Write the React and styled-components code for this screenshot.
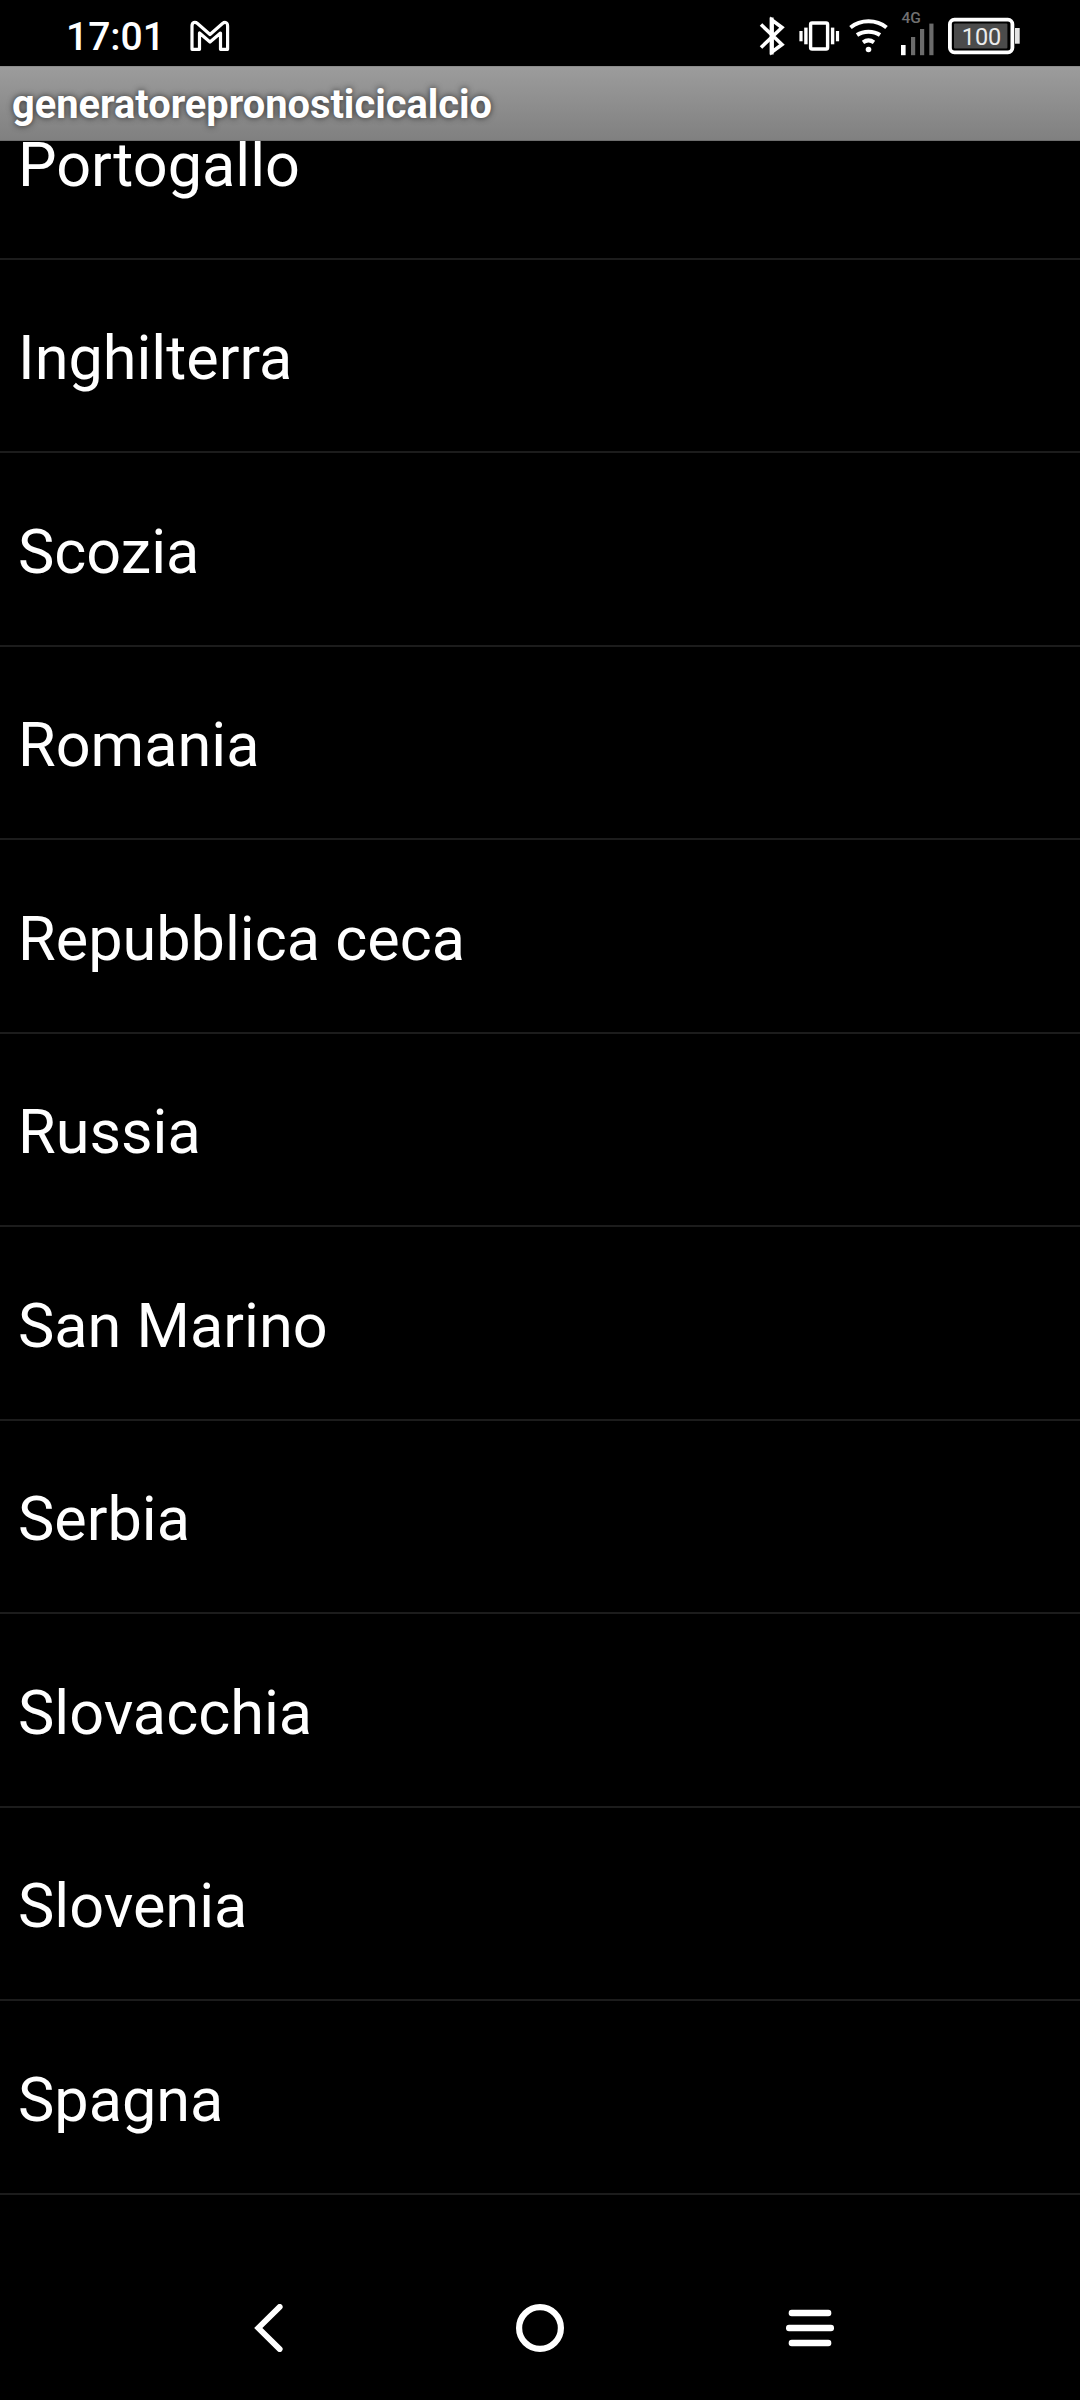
import React from 'react'
import styled, { createGlobalStyle } from 'styled-components';

const GlobalStyle = createGlobalStyle`
  body {
    margin: 0;
    background-color: #000;
    font-family: Roboto, "Liberation Sans", sans-serif;
  }
`

const Screen = styled.div`
  display: flex;
  flex-direction: column;
  width: 1080px;
  height: 2400px;
  overflow: hidden;
  color: #fff;
  background-color: #000;
`

const StatusBar = styled.header`
  display: flex;
  flex: none;
  justify-content: space-between;
  box-sizing: border-box;
  height: 66px;
  padding: 0 60px 0 66px;

  svg {
    display: block;
    flex: none;
  }
`

const StatusGroup = styled.div`
  display: flex;
  gap: ${props => props.$gap}px;
`

const Clock = styled.div`
  width: 96px;
  line-height: 75px;
  font-size: 39px;
  font-weight: 500;
  white-space: nowrap;
`

const TitleBar = styled.div`
  flex: none;
  box-sizing: border-box;
  height: 75px;
  padding-left: 12px;
  border-top: 1px solid #8c8c8c;
  border-bottom: 1px solid #6e6e6e;
  line-height: 75px;
  font-size: 39.8px;
  font-weight: 700;
  text-shadow: 0 0 6px rgba(0, 0, 0, .7);
  background: linear-gradient(#9c9c9c, #808080);
`

const ListView = styled.main`
  flex: 1;
  overflow: hidden;
`

/* scrolled a little, so the first row sits partly under the title */
const List = styled.ul`
  margin: -74.75px 0 0;
  padding: 0;
  list-style: none;
`

const ListItem = styled.li`
  box-sizing: border-box;
  height: 193.5px;
  padding: 3.25px 0 0 18px;
  border-bottom: 2px solid #1c1c1c;
  line-height: 191px;
  font-size: 61.2px;
`

const NavBar = styled.nav`
  display: flex;
  flex: none;
  justify-content: center;
  height: 144px;
`

const NavButton = styled.button`
  display: flex;
  align-items: center;
  justify-content: center;
  width: 270px;
  padding: 0;
  border: 0;
  color: #fff;
  background: none;
`

const countries = [
  'Portogallo',
  'Inghilterra',
  'Scozia',
  'Romania',
  'Repubblica ceca',
  'Russia',
  'San Marino',
  'Serbia',
  'Slovacchia',
  'Slovenia',
  'Spagna',
]

function MailIcon(){
  return (
    <svg width="42" height="66" viewBox="0 0 42 66" fill="none" stroke="#fff" strokeWidth="3.2" strokeLinejoin="round">
      <path d="M3 49.3V26C3 22.3 6 21.5 8.5 23.5L21 34.5L33.5 23.5C36 21.5 38.600 22.3 38.600 26V49.3H31.5V33L21 42L10.500 33V49.3Z" />
    </svg>
  )
}

function BluetoothIcon(){
  return (
    <svg width="32" height="66" viewBox="0 0 32 66" fill="none" stroke="#fff" strokeWidth="3.6">
      <path d="M3 24.500L24 44.500L14 52V20L24 27.500L3 47.500" />
      <path d="M13.600 17.500V54.500" strokeWidth="4" />
    </svg>
  )
}

function VibrateIcon(){
  return (
    <svg width="42" height="66" viewBox="-0.9 0 42 66" fill="#fff">
      <rect x="11.700" y="23" width="17" height="26" rx="1.500" fill="none" stroke="#fff" strokeWidth="3.400" />
      <rect x="0.500" y="31" width="3.200" height="10.300" />
      <rect x="5.300" y="27.600" width="3.400" height="16.700" />
      <rect x="32" y="27.600" width="3.400" height="16.700" />
      <rect x="37" y="31" width="3.200" height="10.300" />
    </svg>
  )
}

function WifiIcon(){
  return (
    <svg width="44" height="66" viewBox="-0.5 0 44 66" fill="none" stroke="#fff" strokeWidth="4">
      <path d="M2 27.500C12 19.200 28 19.200 38 27.500" />
      <path d="M8.500 35C15 30.600 25 30.600 31.500 35" />
      <path d="M14.500 42.300C17.800 40 22.200 40 25.500 42.300" />
      <circle cx="20" cy="49.500" r="2.800" fill="#fff" stroke="none" />
    </svg>
  )
}

function SignalIcon(){
  return (
    <svg width="40" height="66" viewBox="0 0 40 66" fill="#6b6b6b">
      <text x="1.500" y="22.700" fontSize="15.500" fontWeight="500" fill="#707070">4G</text>
      <rect x="1" y="45" width="4.600" height="10.200" fill="#fff" />
      <rect x="11" y="37" width="4.200" height="18.200" />
      <rect x="20" y="29" width="4.200" height="26.200" />
      <rect x="29.300" y="23.600" width="4.200" height="31.600" />
    </svg>
  )
}

function BatteryIcon(){
  return (
    <svg width="72" height="66" viewBox="0 0 72 66">
      <rect x="1.900" y="19.700" width="62.500" height="32.600" rx="4.500" fill="none" stroke="#fff" strokeWidth="3.800" />
      <rect x="6" y="23.500" width="53.400" height="25" rx="1" fill="#4b4b4b" />
      <rect x="67" y="28" width="4.700" height="15.700" fill="#e4e4e4" />
      <text x="33.500" y="45" textAnchor="middle" fontSize="23.500" fill="#ececec">100</text>
    </svg>
  )
}

function App(){
  return (
    <Screen>
      <GlobalStyle />
      <StatusBar>
        <StatusGroup $gap={27}>
          <Clock>17:01</Clock>
          <MailIcon />
        </StatusGroup>
        <StatusGroup $gap={8}>
          <BluetoothIcon />
          <VibrateIcon />
          <WifiIcon />
          <SignalIcon />
          <BatteryIcon />
        </StatusGroup>
      </StatusBar>
      <TitleBar>generatorepronosticicalcio</TitleBar>
      <ListView>
        <List>
          {countries.map(name => <ListItem key={name}>{name}</ListItem>)}
        </List>
      </ListView>
      <NavBar>
        <NavButton aria-label="Indietro">
          <svg width="48" height="48" viewBox="0 0 48 48" fill="none" stroke="currentColor" strokeWidth="5.800" strokeLinecap="round">
            <path d="M33.700 2.900L12.300 24L33.700 45.100" />
          </svg>
        </NavButton>
        <NavButton aria-label="Home">
          <svg width="48" height="48" viewBox="0 0 48 48" fill="none" stroke="currentColor" strokeWidth="6.200">
            <circle cx="24" cy="24" r="20.900" />
          </svg>
        </NavButton>
        <NavButton aria-label="Menu">
          <svg width="48" height="48" viewBox="0 0 48 48" fill="currentColor">
            <rect x="2.700" y="5.700" width="42.600" height="6.600" rx="3" />
            <rect x="0" y="20.700" width="48" height="6.600" rx="3" />
            <rect x="2.700" y="35.700" width="42.600" height="6.600" rx="3" />
          </svg>
        </NavButton>
      </NavBar>
    </Screen>
  )
}

export default App;
